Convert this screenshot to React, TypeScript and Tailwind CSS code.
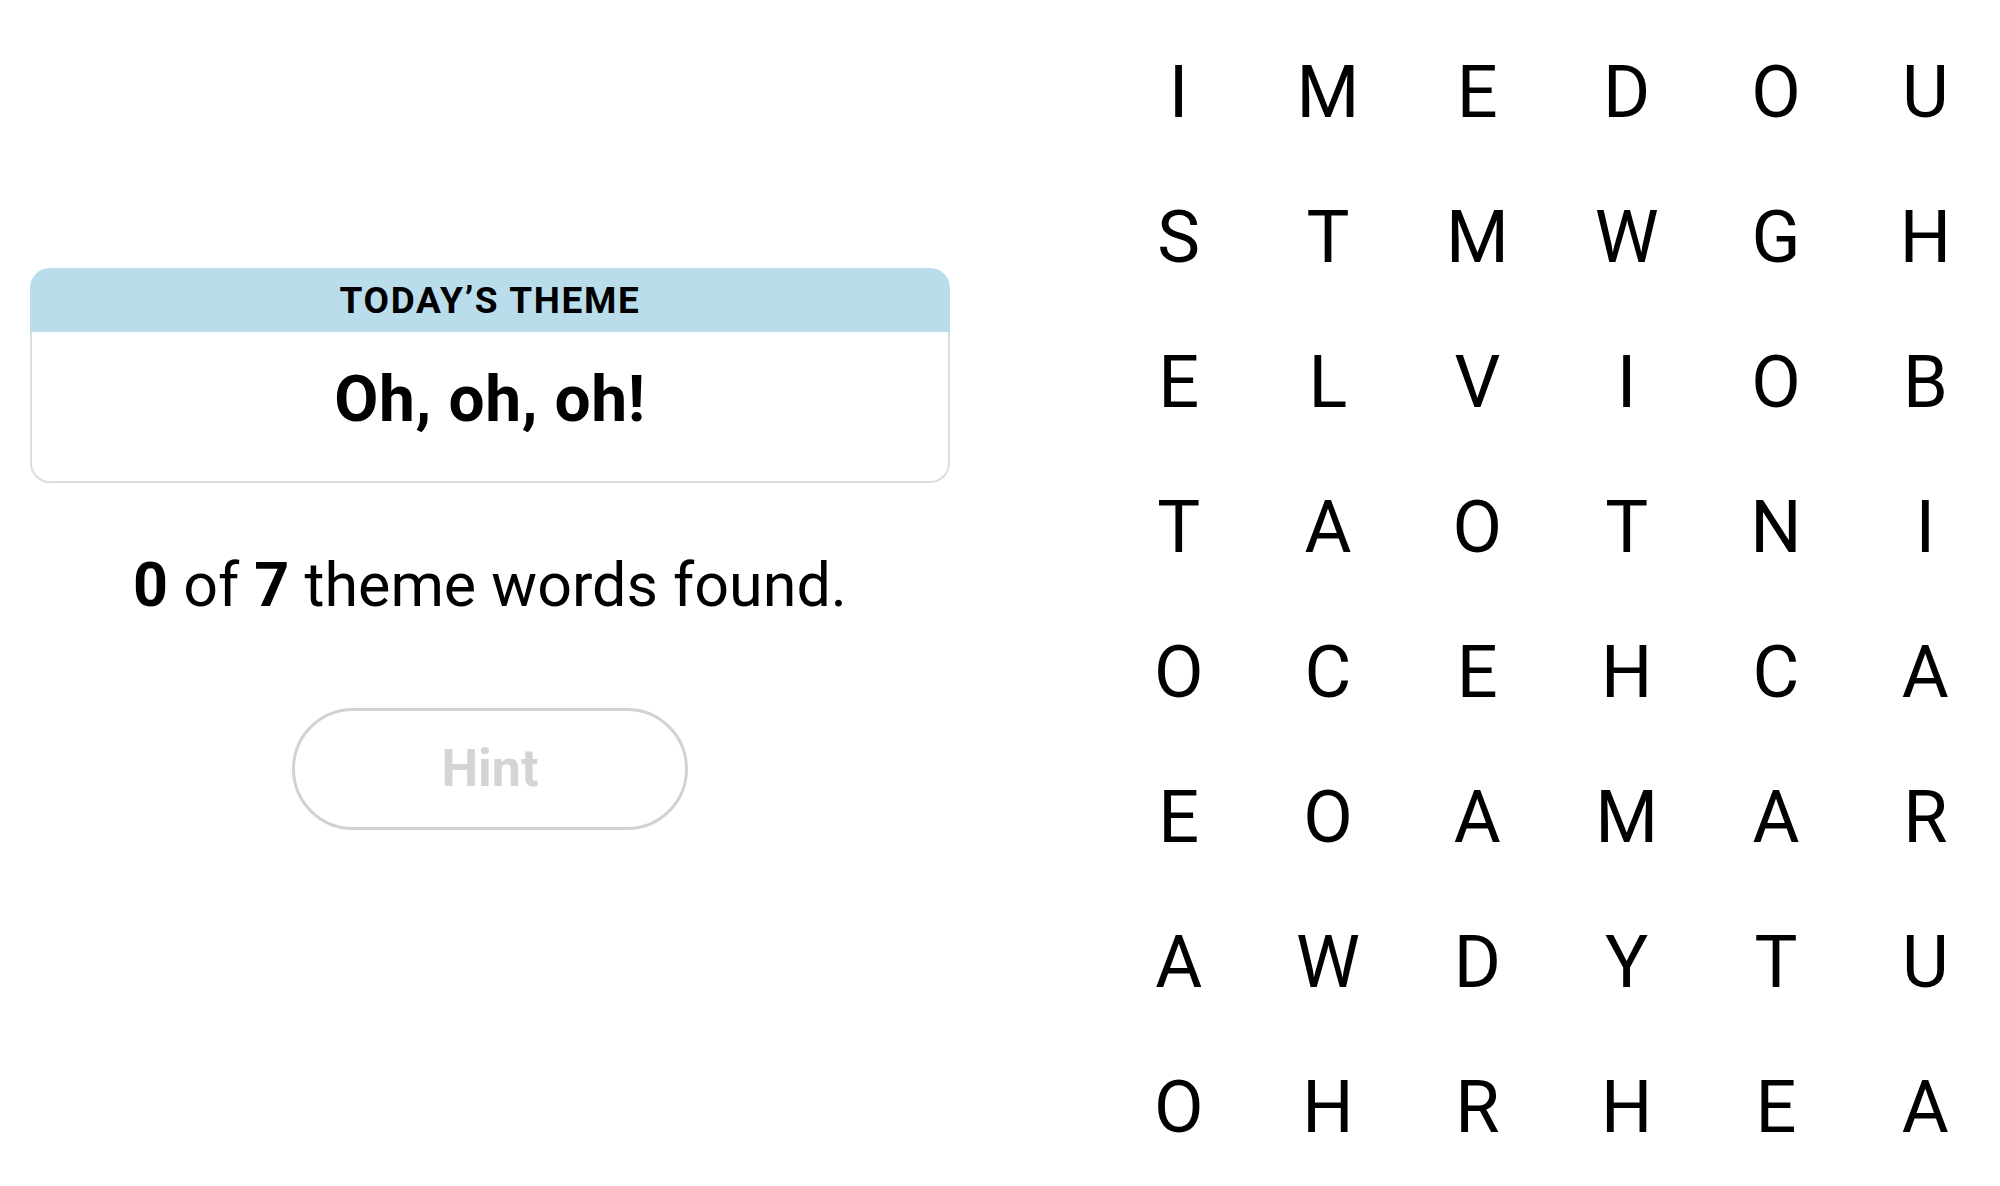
const rows = [
  "IMEDOU",
  "STMWGH",
  "ELVIOB",
  "TAOTNI",
  "OCEHCA",
  "EOAMAR",
  "AWDYTU",
  "OHRHEA",
];

const font = { fontFamily: 'Roboto, "Liberation Sans", Arial, sans-serif' };

function ThemeCard() {
  return (
    <div className="w-[920px]">
      <div className="h-[64px] rounded-t-[20px] bg-[#b9ddeb] flex items-center justify-center">
        <span className="text-[37px] font-bold tracking-[0.045em] leading-none text-black">TODAY’S THEME</span>
      </div>
      <div className="h-[151px] border-2 border-t-0 border-[#dcdcdc] rounded-b-[20px] flex items-center justify-center pb-[14px]">
        <span className="text-[64px] font-bold tracking-[0.01em] leading-none text-black">Oh, oh, oh!</span>
      </div>
    </div>
  );
}

export default function App() {
  return (
    <div className="w-[2000px] h-[1186px] bg-white flex overflow-hidden text-black" style={font}>
      <div className="w-[950px] pl-[30px] pt-[268px] flex flex-col items-center">
        <ThemeCard />
        <p className="mt-[72px] text-[61px] leading-none">
          <span className="font-bold">0</span> of <span className="font-bold">7</span> theme words found.
        </p>
        <button className="mt-[92px] w-[396px] h-[122px] rounded-full border-[3px] border-[#d2d2d2] bg-white text-[52px] font-bold text-[#d4d4d4] leading-none">
          Hint
        </button>
      </div>
      <div className="ml-auto w-[896px] pt-[20px]">
        <div className="grid grid-cols-6">
          {rows.map((row, r) =>
            row.split("").map((ch, c) => (
              <div key={`${r}-${c}`} className="h-[145px] flex items-center justify-center text-[72px] leading-none">
                {ch}
              </div>
            ))
          )}
        </div>
      </div>
    </div>
  );
}
